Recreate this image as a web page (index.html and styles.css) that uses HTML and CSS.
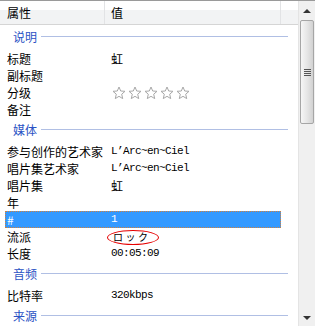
FILE: index.html
```html
<!DOCTYPE html>
<html lang="zh-CN">
<head>
	<meta charset="UTF-8">
	<title>属性</title>
<link rel="stylesheet" href="styles.css">
</head>
<body>
	<div class='prop-panel'>
		<div class='prop-list'>
			<div class='list-hd'>
				<div class='hd-name'>属性</div>
				<div class='hd-val'>值</div>
				<div class='hd-rest'></div>
			</div>

			<div class='group'><span class='group-title'>说明</span><span class='group-line'></span></div>
			<div class='row'><div class='k'>标题</div><div class='v'>虹</div></div>
			<div class='row'><div class='k'>副标题</div><div class='v'></div></div>
			<div class='row'>
				<div class='k'>分级</div>
				<div class='v'>
					<svg class='stars' width='80' height='14' viewBox='0 0 80 14'>
						<g fill='#fff' stroke='#a8a8a8' stroke-width='1' stroke-linejoin='round'>
							<path id='star' d='M7 1 L8.7 5 L13 5.3 L9.7 8.2 L10.7 12.6 L7 10.3 L3.3 12.6 L4.3 8.2 L1 5.3 L5.3 5 Z'/>
							<use href='#star' x='16'/>
							<use href='#star' x='32'/>
							<use href='#star' x='48'/>
							<use href='#star' x='64'/>
						</g>
					</svg>
				</div>
			</div>
			<div class='row'><div class='k'>备注</div><div class='v'></div></div>

			<div class='group'><span class='group-title'>媒体</span><span class='group-line'></span></div>
			<div class='row'><div class='k'>参与创作的艺术家</div><div class='v mono'>L’Arc~en~Ciel</div></div>
			<div class='row'><div class='k'>唱片集艺术家</div><div class='v mono'>L’Arc~en~Ciel</div></div>
			<div class='row'><div class='k'>唱片集</div><div class='v'>虹</div></div>
			<div class='row'><div class='k'>年</div><div class='v'></div></div>
			<div class='row selected'><div class='k'>#</div><div class='v mono'>1</div></div>
			<div class='row'>
				<div class='k'>流派</div>
				<div class='v genre'>ロック<span class='mark'></span></div>
			</div>
			<div class='row'><div class='k'>长度</div><div class='v mono'>00:05:09</div></div>

			<div class='group'><span class='group-title'>音频</span><span class='group-line'></span></div>
			<div class='row'><div class='k'>比特率</div><div class='v mono'>320kbps</div></div>

			<div class='group'><span class='group-title'>来源</span><span class='group-line'></span></div>
		</div>

		<div class='scrollbar'>
			<div class='sb-btn'><span class='arrow-up'></span></div>
			<div class='sb-track'>
				<div class='sb-thumb'><span class='grip'></span></div>
			</div>
			<div class='sb-btn sb-btn-down'><span class='arrow-down'></span></div>
		</div>
	</div>
</body>
</html>
```

FILE: styles.css
```css
html,body{
	margin:0;
	padding:0;
	background:#fff;
}
.prop-panel{
	display:flex;
	width:315px;
	height:326px;
	overflow:hidden;
	box-sizing:border-box;
	border-top:1px solid #9a9a9a;
	font-family:"Noto Sans CJK SC", sans-serif;
	font-size:12px;
	color:#000;
}
.prop-list{
	width:298px;
	flex:none;
	overflow:hidden;
}

/* 表头 */
.list-hd{
	display:flex;
	height:24px;
	box-sizing:border-box;
	border-bottom:1px solid #d5d5d5;
	background:linear-gradient(#fff 0,#fff 40%,#f2f3f4 40%,#f2f3f4 100%);
	line-height:23px;
}
.hd-name{
	width:105px;
	box-sizing:border-box;
	padding-left:7px;
	border-right:1px solid #e2e3e5;
}
.hd-val{
	width:176px;
	box-sizing:border-box;
	padding-left:6px;
	border-right:1px solid #e2e3e5;
}
.hd-rest{
	flex:1;
}

/* 分组 */
.group{
	display:flex;
	align-items:center;
	gap:4px;
	height:25px;
	padding:0 10px 2px 13px;
	box-sizing:border-box;
}
.group-title{
	color:#2a52c4;
	line-height:14px;
}
.group-line{
	flex:1;
	height:1px;
	background:#b0bfe4;
}

/* 行 */
.row{
	display:flex;
	align-items:center;
	height:17px;
	width:276px;
	margin-left:5px;
	box-sizing:border-box;
	white-space:nowrap;
}
.row .k{
	width:106px;
	flex:none;
	padding-left:2px;
	box-sizing:border-box;
	line-height:17px;
}
.row .v{
	flex:1;
	line-height:17px;
}
.row .mono{
	font-family:"Liberation Mono", "Noto Sans CJK SC", monospace;
	font-size:11px;
	letter-spacing:-0.6px;
}
.stars{
	display:block;
	margin-left:1px;
}
.row.selected{
	background:#3399ff;
	color:#fff;
	outline:1px dotted #d2803a;
	outline-offset:-1px;
}
.genre{
	position:relative;
	padding-left:2px;
	font-family:"Noto Sans CJK JP", sans-serif;
	font-size:10px;
	letter-spacing:2.5px;
}
.genre .mark{
	position:absolute;
	left:-4px;
	top:2px;
	width:52px;
	height:15px;
	box-sizing:border-box;
	border:1px solid #e60000;
	border-radius:50%;
}

/* 滚动条 */
.scrollbar{
	flex:1;
	display:flex;
	flex-direction:column;
	background:#f0f0f0;
	border-left:1px solid #e4e4e4;
}
.sb-btn{
	height:19px;
	display:flex;
	align-items:center;
	justify-content:center;
}
.sb-btn-down{
	height:17px;
}
.arrow-up{
	width:0;
	height:0;
	border-left:4px solid transparent;
	border-right:4px solid transparent;
	border-bottom:4px solid #333;
}
.arrow-down{
	width:0;
	height:0;
	border-left:4px solid transparent;
	border-right:4px solid transparent;
	border-top:4px solid #333;
}
.sb-track{
	flex:1;
}
.sb-thumb{
	height:104px;
	margin:0 1px 0 1px;
	box-sizing:border-box;
	border:1px solid #a6a6a6;
	border-radius:2px;
	background:linear-gradient(to right,#f6f6f6,#e6e6e6 50%,#d2d2d2);
	display:flex;
	align-items:center;
	justify-content:center;
}
.grip{
	width:7px;
	height:7px;
	background:repeating-linear-gradient(#555 0,#555 1px,transparent 1px,transparent 2px);
}
```
